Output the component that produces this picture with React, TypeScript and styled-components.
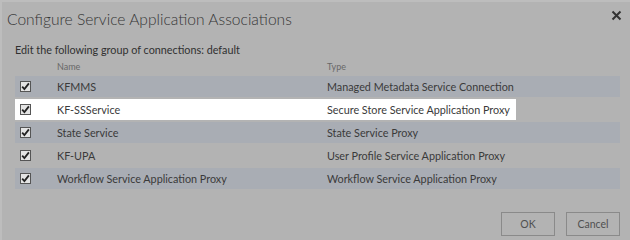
import React from "react";
import styled, { createGlobalStyle } from "styled-components";

const Global = createGlobalStyle`
  html, body { margin: 0; padding: 0; background: #b3b3b3; }
  body { font-family: "Lato", "Open Sans", sans-serif; }
`;

const Dialog = styled.div`
  width: 630px;
  height: 240px;
  box-sizing: border-box;
  background: #b3b3b3;
  border-top: 2px solid #bdbdbd;
  border-left: 2px solid #bdbdbd;
  padding: 6px 8px 0 5px;
  display: flex;
  flex-direction: column;
`;

const TitleBar = styled.div`
  display: flex;
  justify-content: space-between;
  align-items: flex-start;
`;

const Title = styled.h1`
  margin: 0;
  font-family: "Lato", sans-serif;
  font-weight: 300;
  font-size: 15.6px;
  line-height: 22px;
  color: #363636;
`;

const Close = styled.button`
  border: none;
  background: none;
  padding: 0;
  margin: 2px 0 0 0;
  width: 11px;
  height: 11px;
  display: flex;
  cursor: pointer;
`;

const Intro = styled.div`
  margin: 13px 0 0 8px;
  font-size: 10.8px;
  line-height: 14px;
  color: #303030;
`;

const Table = styled.div`
  margin: 2px 0 0 8px;
  display: flex;
  flex-direction: column;
  gap: 2px;
`;

const HeadRow = styled.div`
  display: grid;
  grid-template-columns: 42px 270px 1fr;
  height: 14px;
  margin-bottom: 1px;
  align-items: center;
  font-size: 9px;
  color: #686868;
`;

const Row = styled.div<{ $tone: "band" | "white" | "plain" }>`
  display: grid;
  grid-template-columns: 42px 270px 1fr;
  align-items: center;
  height: 21px;
  width: ${(p) => (p.$tone === "white" ? "501px" : "605px")};
  background: ${(p) =>
    p.$tone === "band" ? "#a9adb4" : p.$tone === "white" ? "#ffffff" : "transparent"};
  font-size: 10.8px;
  color: #3a3a3a;
  white-space: nowrap;
`;

const Cell = styled.div``;

const Check = styled.span`
  margin-left: 5px;
  width: 11px;
  height: 11px;
  border: 1px solid #555;
  background: #e4e4e4;
  box-sizing: border-box;
  display: flex;
  align-items: center;
  justify-content: center;
`;

const Footer = styled.div`
  margin-top: auto;
  margin-bottom: 4px;
  display: flex;
  justify-content: flex-end;
  gap: 11px;
  padding-right: 2px;
`;

const Button = styled.button`
  width: 54px;
  height: 24px;
  box-sizing: border-box;
  border: 1px solid #8a8a8a;
  background: #b3b3b3;
  font-family: "Lato", sans-serif;
  font-size: 10.5px;
  color: #505050;
  padding: 0;
`;

const CheckMark = () => (
  <svg width="9" height="9" viewBox="0 0 9 9">
    <path d="M1.2 4.6 L3.4 7 L7.9 1.4" fill="none" stroke="#222" strokeWidth="1.8" />
  </svg>
);

const rows: { name: string; type: string; tone: "band" | "white" | "plain" }[] = [
  { name: "KFMMS", type: "Managed Metadata Service Connection", tone: "band" },
  { name: "KF-SSService", type: "Secure Store Service Application Proxy", tone: "white" },
  { name: "State Service", type: "State Service Proxy", tone: "band" },
  { name: "KF-UPA", type: "User Profile Service Application Proxy", tone: "plain" },
  { name: "Workflow Service Application Proxy", type: "Workflow Service Application Proxy", tone: "band" },
];

export default function App() {
  return (
    <>
      <Global />
      <Dialog>
        <TitleBar>
          <Title>Configure Service Application Associations</Title>
          <Close aria-label="Close">
            <svg width="11" height="11" viewBox="0 0 11 11">
              <path d="M1.5 1.5 L9.5 9.5 M9.5 1.5 L1.5 9.5" stroke="#333" strokeWidth="2" />
            </svg>
          </Close>
        </TitleBar>
        <Intro>Edit the following group of connections: default</Intro>
        <Table>
          <HeadRow>
            <Cell />
            <Cell>Name</Cell>
            <Cell>Type</Cell>
          </HeadRow>
          {rows.map((r) => (
            <Row key={r.name} $tone={r.tone}>
              <Check>
                <CheckMark />
              </Check>
              <Cell>{r.name}</Cell>
              <Cell>{r.type}</Cell>
            </Row>
          ))}
        </Table>
        <Footer>
          <Button>OK</Button>
          <Button>Cancel</Button>
        </Footer>
      </Dialog>
    </>
  );
}
